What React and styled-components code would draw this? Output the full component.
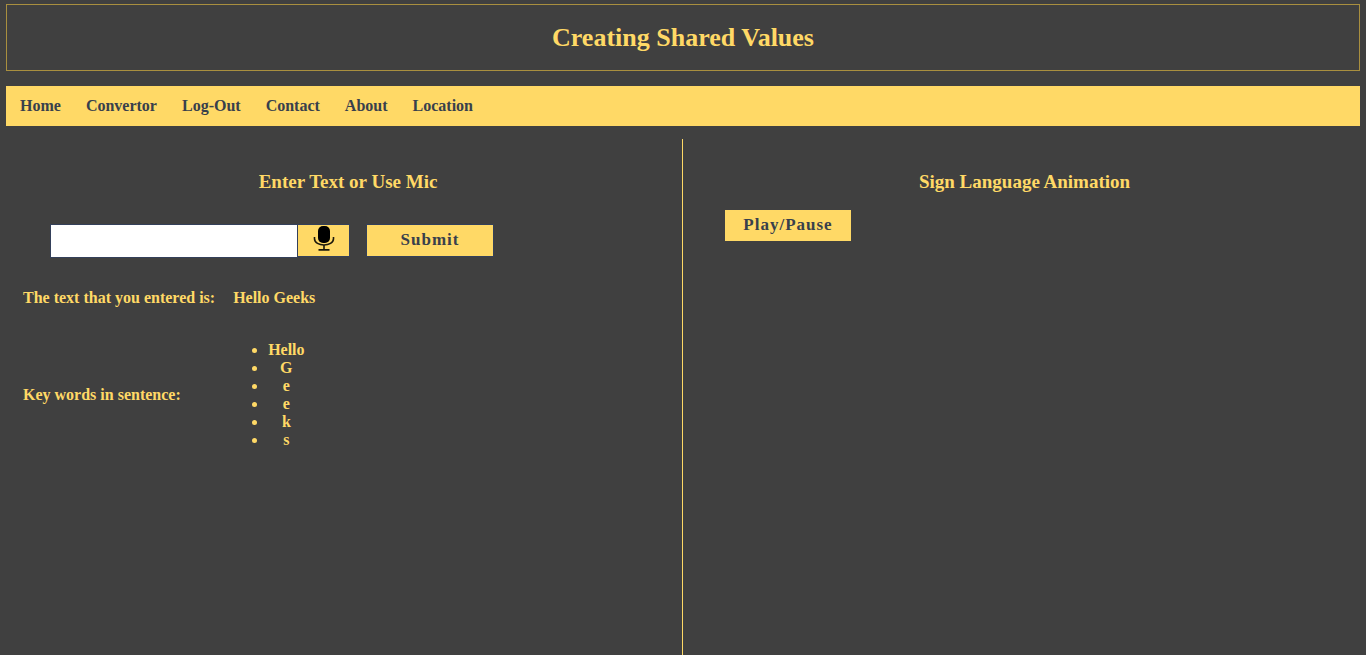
import React from 'react';
import styled, { createGlobalStyle } from 'styled-components';

const yellow = '#ffd966';
const dark = '#404040';
const navy = '#34405a';

const GlobalStyle = createGlobalStyle`
  * { box-sizing: border-box; }
  body {
    margin: 0;
    background: ${dark};
    color: ${yellow};
    font: bold 16px/18px "Liberation Serif", "Times New Roman", serif;
  }
`;

const Page = styled.div`
  display: flex;
  flex-direction: column;
  min-height: 100vh;
  padding-top: 4px;
`;

const Header = styled.header`
  margin: 0 6px 15px;
  padding: 18px;
  border: 1px solid #a98f3f;
  text-align: center;
`;

const Title = styled.h1`
  margin: 0;
  font-size: 26px;
  line-height: 29px;
`;

const NavBar = styled.nav`
  display: flex;
  flex-wrap: wrap;
  gap: 25px;
  margin: 0 6px 13px;
  padding: 11px 14px;
  background: ${yellow};
`;

const NavLink = styled.a`
  color: #38404c;
  text-decoration: none;
`;

const Main = styled.main`
  flex: 1;
  display: grid;
  grid-template-columns: 1fr 1fr;
`;

const Panel = styled.section`
  padding: ${(p) => (p.$divided ? '32px 0 0 14px' : '32px 0 0')};
  border-right: ${(p) => (p.$divided ? `1px solid ${yellow}` : 'none')};
`;

const Heading = styled.h2`
  margin: 0;
  font-size: 19px;
  line-height: 22px;
  text-align: center;
`;

const Form = styled.form`
  display: flex;
  align-items: flex-start;
  margin: 31px 0 0 36px;
`;

const TextInput = styled.input`
  width: 248px;
  height: 34px;
  padding: 4px 8px;
  border: 1px solid ${navy};
  background: #fff;
  font: inherit;
`;

const Button = styled.button`
  display: flex;
  align-items: center;
  justify-content: center;
  width: 128px;
  height: 33px;
  padding: 0 0 2px;
  border: 1px solid ${navy};
  background: ${yellow};
  color: #38404c;
  font: inherit;
  font-size: 17px;
  letter-spacing: 1px;
  cursor: pointer;
`;

const MicButton = styled(Button)`
  width: 52px;
  border-left: 0;
  margin-right: 16px;
`;

const PlayButton = styled(Button)`
  margin: 16px 0 0 41px;
  border-color: ${dark};
`;

const Results = styled.table`
  margin: 31px 0 0 9px;
  border-collapse: collapse;
`;

const Label = styled.th`
  padding: 0 18px 34px 0;
  text-align: left;
  vertical-align: middle;
`;

const Value = styled.td`
  padding: 0 0 34px;
`;

const Words = styled.ul`
  display: inline-block;
  margin: 0;
  padding-left: 35px;
  text-align: center;
  vertical-align: top;
`;

const links = ['Home', 'Convertor', 'Log-Out', 'Contact', 'About', 'Location'];
const words = ['Hello', 'G', 'e', 'e', 'k', 's'];

const MicIcon = () => (
  <svg width="22" height="27" viewBox="0 0 22 27" fill="none" stroke="#1c190c" aria-hidden="true">
    <rect x="5" y="0" width="12" height="17" rx="5" fill="#000" stroke="none" />
    <path d="M1.5 11v1.8c0 8.2 19 8.2 19 0V11" strokeWidth="1.6" />
    <path d="M11 19v4.7M5.5 23.9h11" strokeWidth="1.6" />
  </svg>
);

export default function App() {
  return (
    <>
      <GlobalStyle />
      <Page>
        <Header>
          <Title>Creating Shared Values</Title>
        </Header>
        <NavBar>
          {links.map((name) => (
            <NavLink key={name} href="#">{name}</NavLink>
          ))}
        </NavBar>
        <Main>
          <Panel $divided>
            <Heading>Enter Text or Use Mic</Heading>
            <Form onSubmit={(e) => e.preventDefault()}>
              <TextInput type="text" aria-label="Enter text" />
              <MicButton type="button" aria-label="Use mic"><MicIcon /></MicButton>
              <Button type="submit">Submit</Button>
            </Form>
            <Results>
              <tbody>
                <tr>
                  <Label scope="row">The text that you entered is:</Label>
                  <Value>Hello Geeks</Value>
                </tr>
                <tr>
                  <Label scope="row">Key words in sentence:</Label>
                  <Value>
                    <Words>
                      {words.map((word, i) => <li key={i}>{word}</li>)}
                    </Words>
                  </Value>
                </tr>
              </tbody>
            </Results>
          </Panel>
          <Panel>
            <Heading>Sign Language Animation</Heading>
            <PlayButton type="button">Play/Pause</PlayButton>
          </Panel>
        </Main>
      </Page>
    </>
  );
}
